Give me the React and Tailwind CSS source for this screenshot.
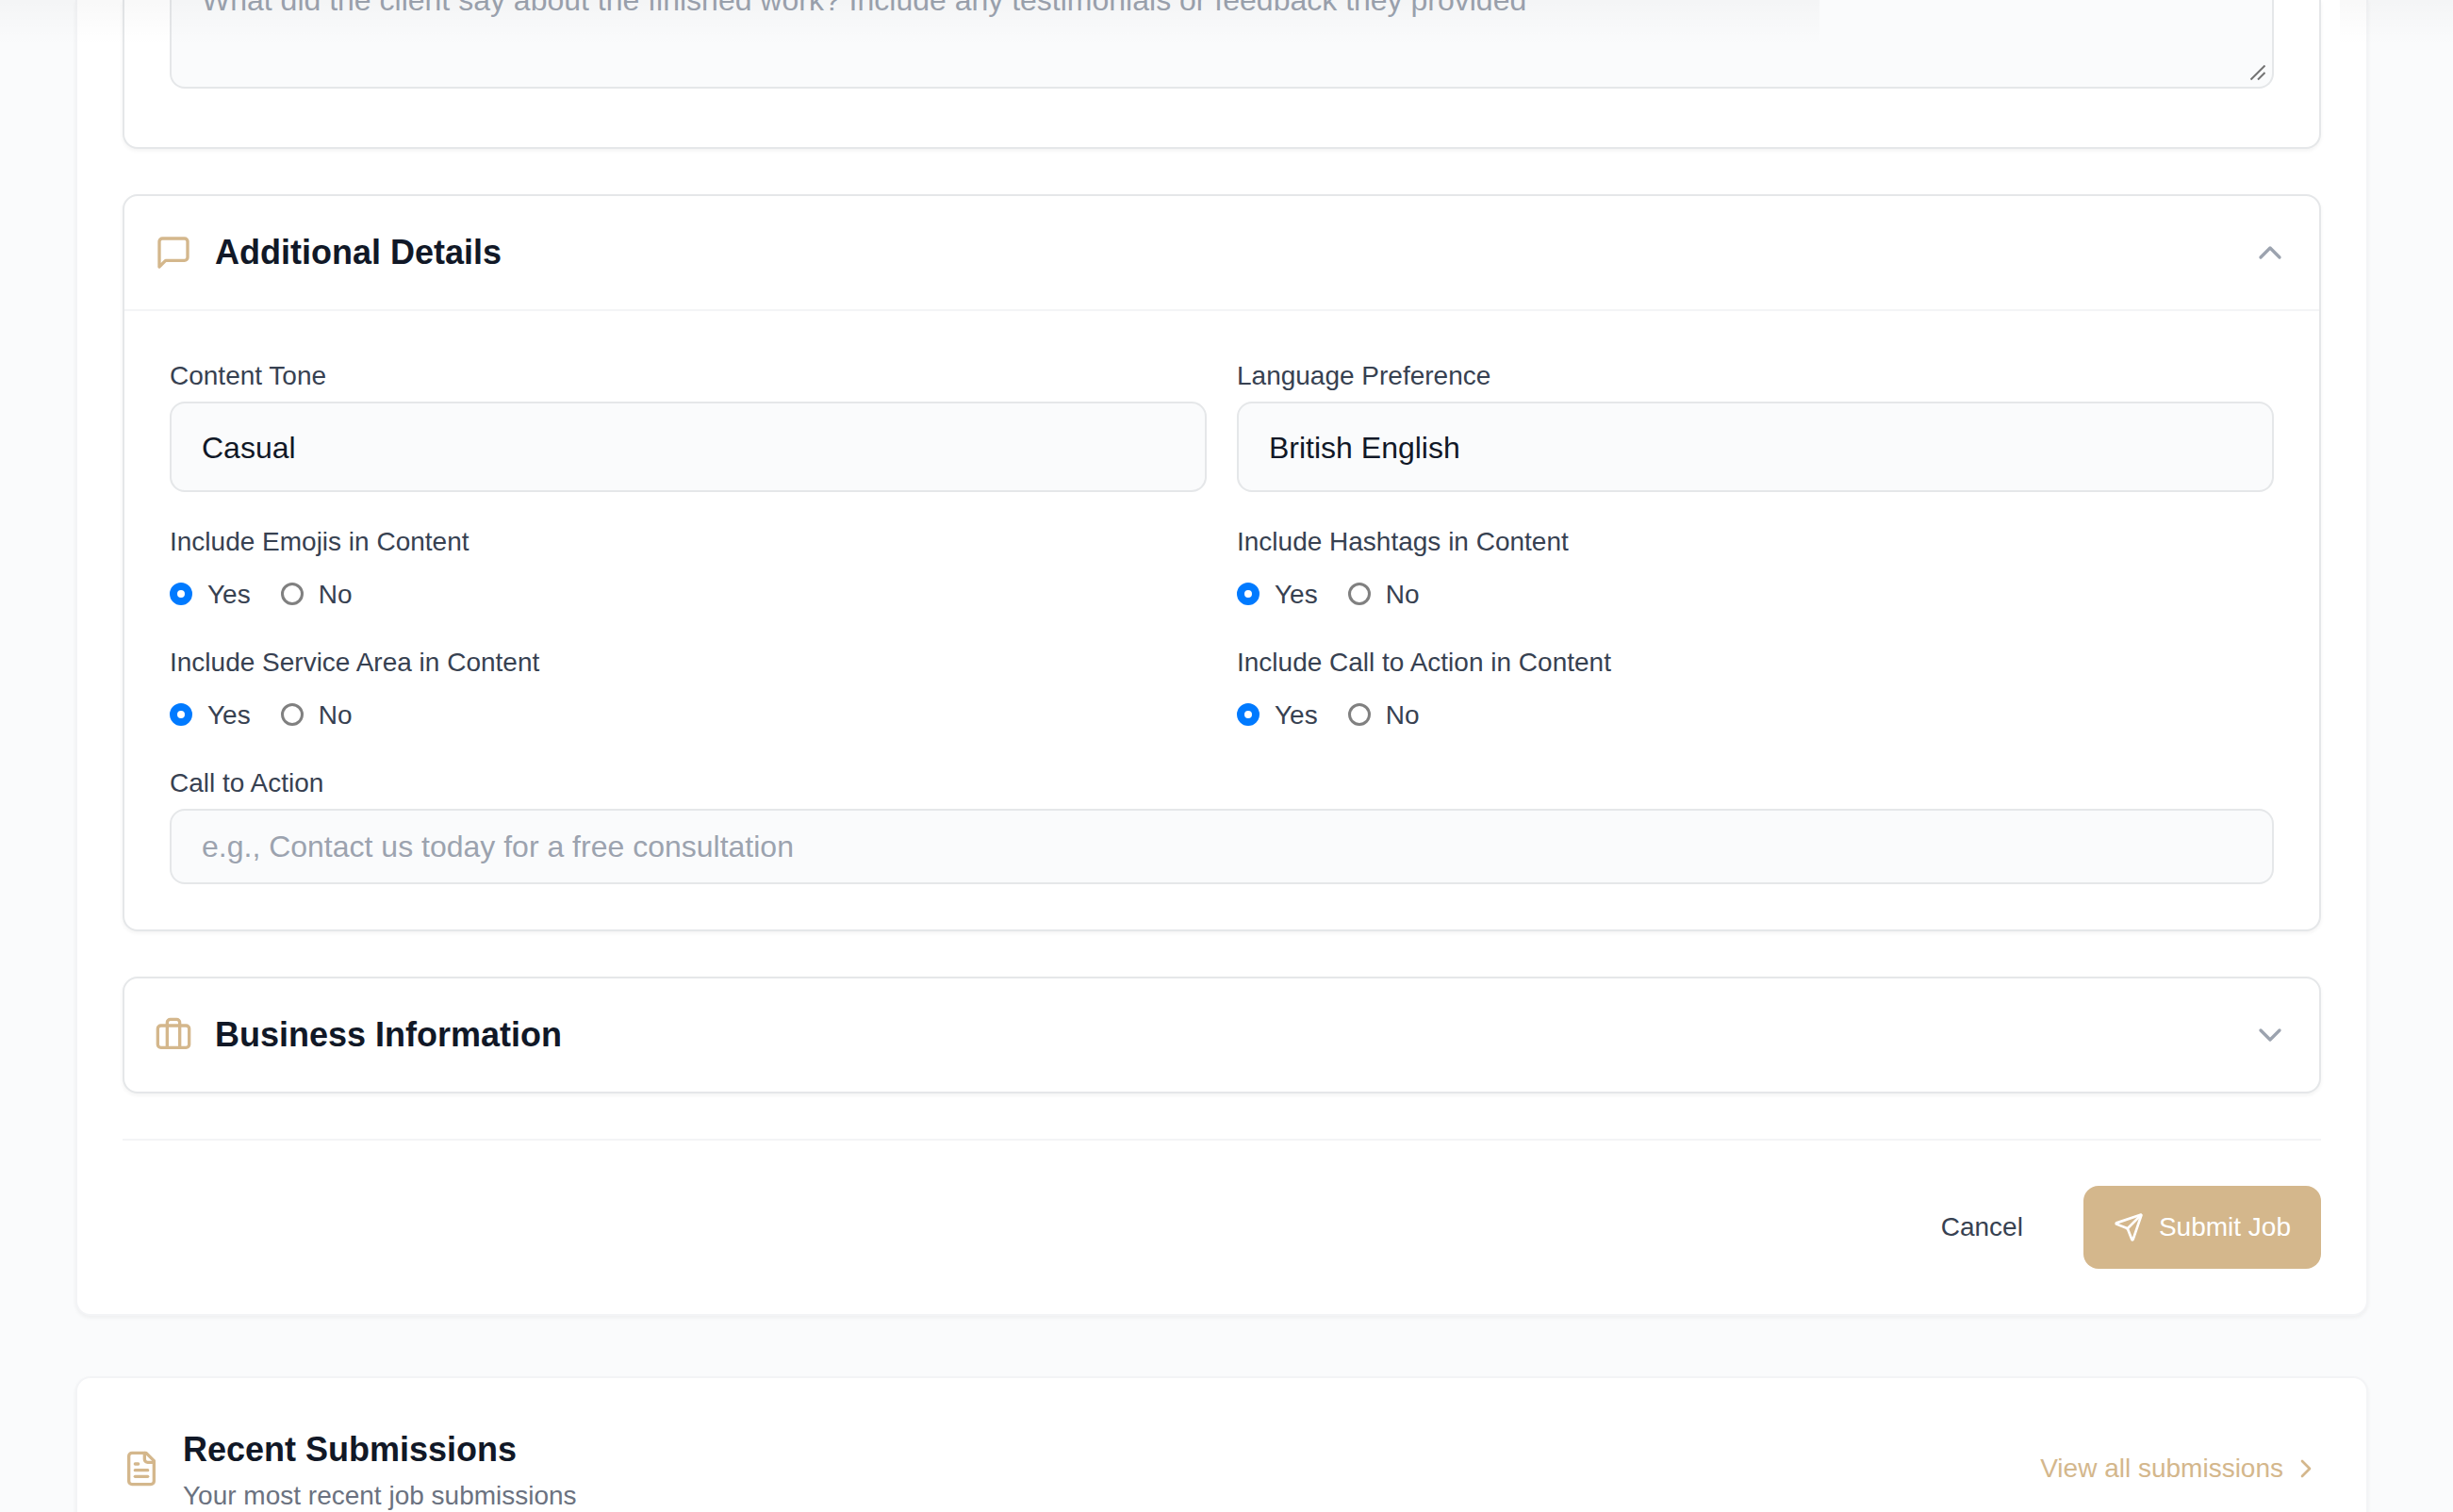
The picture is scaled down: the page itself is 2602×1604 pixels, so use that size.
import React, { useState } from 'react';
import { Briefcase, ChevronDown, ChevronRight, ChevronUp } from 'lucide-react';

const TOGGLES = [
  { key: 'emojis',      label: 'Include Emojis in Content' },
  { key: 'hashtags',    label: 'Include Hashtags in Content' },
  { key: 'serviceArea', label: 'Include Service Area in Content' },
  { key: 'cta',         label: 'Include Call to Action in Content' },
];

function Icon({ className, strokeWidth = 2, children }) {
  return (
    <svg viewBox="0 0 24 24" fill="none" stroke="currentColor" strokeWidth={strokeWidth} strokeLinecap="round" strokeLinejoin="round" className={className}>
      {children}
    </svg>
  );
}

function MessageIcon() {
  return (
    <Icon className="size-10 text-[#d4b78c]">
      <path d="M21 15a2 2 0 0 1-2 2H7l-4 4V5a2 2 0 0 1 2-2h14a2 2 0 0 1 2 2z" />
    </Icon>
  );
}

function FileIcon() {
  return (
    <Icon className="size-10 text-[#d4b78c]">
      <path d="M15 2H6a2 2 0 0 0-2 2v16a2 2 0 0 0 2 2h12a2 2 0 0 0 2-2V7Z" />
      <path d="M14 2v4a2 2 0 0 0 2 2h4" />
      <path d="M10 9H8" />
      <path d="M16 13H8" />
      <path d="M16 17H8" />
    </Icon>
  );
}

function SendIcon() {
  return (
    <Icon className="size-8">
      <path d="M14.536 21.686a.5.5 0 0 0 .937-.024l6.5-19a.496.496 0 0 0-.635-.635l-19 6.5a.5.5 0 0 0-.024.937l7.93 3.18a2 2 0 0 1 1.112 1.11z" />
      <path d="m21.854 2.147-10.94 10.939" />
    </Icon>
  );
}

function Section({ icon, title, open, onToggle, children }) {
  const Chevron = open ? ChevronUp : ChevronDown;
  return (
    <section className="rounded-2xl border-2 border-[#e5e7e9] bg-white shadow-[0_2px_4px_rgba(0,0,0,0.05)]">
      <button onClick={onToggle} className={`flex w-full items-center justify-between p-8 ${open ? 'border-b-2 border-gray-100' : ''}`}>
        <span className="flex items-center gap-6">
          {icon}
          <span className="text-[36px] leading-[56px] font-bold text-[#111827]">{title}</span>
        </span>
        <Chevron className="size-10 text-[#9ca3af]" />
      </button>
      {open && <div className="p-12">{children}</div>}
    </section>
  );
}

function Label({ children }) {
  return <span className="block h-10 text-[28px] leading-[42px] text-[#374151]">{children}</span>;
}

function SelectField({ label, value }) {
  return (
    <div className="flex flex-col gap-2">
      <Label>{label}</Label>
      <div className="flex h-24 items-center rounded-2xl border-2 border-[#e5e7e9] bg-[#fafbfc] px-8 pt-0.5 text-[32px] text-[#111827]">{value}</div>
    </div>
  );
}

function Radio({ label, checked, onChange }) {
  return (
    <label className="flex items-center gap-4">
      <input
        type="radio"
        checked={checked}
        onChange={onChange}
        className="size-6 appearance-none rounded-full border-[3px] border-[#808080] bg-white checked:border-8 checked:border-[#007aff]"
      />
      <Label>{label}</Label>
    </label>
  );
}

export default function App() {
  const [open, setOpen] = useState({ details: true, business: false });
  const [flags, setFlags] = useState({ emojis: true, hashtags: true, serviceArea: true, cta: true });

  const toggle = (key) => setOpen({ ...open, [key]: !open[key] });

  return (
    <div className="relative h-[1604px] overflow-hidden bg-[#fafbfc] pr-[90px] pl-20 font-['Liberation_Sans',Arial,sans-serif]">
      <main className="flex flex-col gap-16">
        {/* Job form */}
        <div className="rounded-b-2xl border-2 border-t-0 border-gray-100 bg-white px-12 pb-12 shadow-[0_2px_4px_rgba(0,0,0,0.05)]">
          <div className="flex flex-col gap-12">
            {/* Tail of the client feedback section */}
            <div className="h-[158px] rounded-b-2xl border-2 border-t-0 border-[#e5e7e9] bg-white px-12 shadow-[0_2px_4px_rgba(0,0,0,0.05)]">
              <div className="relative flex h-[94px] items-start rounded-b-2xl border-2 border-t-0 border-[#e5e7e9] bg-[#fafbfc] px-8">
                <p className="-mt-6 text-[32px] leading-[48px] text-[#9ca3af]">
                  What did the client say about the finished work? Include any testimonials or feedback they provided
                </p>
                <svg viewBox="0 0 16 16" className="absolute right-[7px] bottom-[7px] size-4" fill="none" stroke="#737373" strokeWidth="2">
                  <path d="M0.5 15.5 15.5 0.5M8 15.5 15.5 8" />
                </svg>
              </div>
            </div>

            {/* Additional details */}
            <Section icon={<MessageIcon />} title="Additional Details" open={open.details} onToggle={() => toggle('details')}>
              <div className="grid grid-cols-2 gap-8">
                <SelectField label="Content Tone" value="Casual" />
                <SelectField label="Language Preference" value="British English" />
                {TOGGLES.map(({ key, label }) => (
                  <div key={key} className="flex flex-col gap-4">
                    <Label>{label}</Label>
                    <div className="flex gap-8">
                      <Radio label="Yes" checked={flags[key]} onChange={() => setFlags({ ...flags, [key]: true })} />
                      <Radio label="No" checked={!flags[key]} onChange={() => setFlags({ ...flags, [key]: false })} />
                    </div>
                  </div>
                ))}
                <div className="col-span-2 flex flex-col gap-2">
                  <Label>Call to Action</Label>
                  <input
                    placeholder="e.g., Contact us today for a free consultation"
                    className="h-20 w-full rounded-2xl border-2 border-[#e5e7e9] bg-[#fafbfc] px-8 text-[32px] text-[#111827] placeholder-[#9ca3af]"
                  />
                </div>
              </div>
            </Section>

            {/* Business information */}
            <Section
              icon={<Briefcase className="size-10 text-[#d4b78c]" />}
              title="Business Information"
              open={open.business}
              onToggle={() => toggle('business')}
            />

            {/* Actions */}
            <div className="flex justify-end gap-8 border-t-2 border-gray-100 pt-12">
              <button className="h-[88px] px-8 text-[28px] leading-[42px] text-[#374151]">Cancel</button>
              <button className="flex h-[88px] items-center gap-4 rounded-2xl bg-[#d4b78c] px-8 text-[28px] leading-[42px] text-white">
                <SendIcon />
                Submit Job
              </button>
            </div>
          </div>
        </div>

        {/* Recent submissions */}
        <div className="h-60 rounded-2xl border-2 border-gray-100 bg-white p-12 shadow-[0_2px_4px_rgba(0,0,0,0.05)]">
          <div className="flex items-center justify-between">
            <div className="flex items-center gap-6">
              <FileIcon />
              <div>
                <h2 className="text-[36px] leading-[56px] font-bold text-[#111827]">Recent Submissions</h2>
                <p className="h-10 text-[28px] leading-[42px] text-[#6b7280]">Your most recent job submissions</p>
              </div>
            </div>
            <a className="flex items-center gap-2 text-[28px] leading-[42px] text-[#d4b78c]">
              View all submissions
              <ChevronRight className="size-8" />
            </a>
          </div>
        </div>
      </main>

      {/* Shadow cast by the bar above the scroll area */}
      <div className="pointer-events-none absolute top-0 left-0 h-12 w-[1930px] bg-linear-to-b from-black/[0.025] to-transparent" />
      <div className="pointer-events-none absolute top-0 right-0 h-12 w-[120px] bg-linear-to-b from-black/[0.025] to-transparent" />
    </div>
  );
}
